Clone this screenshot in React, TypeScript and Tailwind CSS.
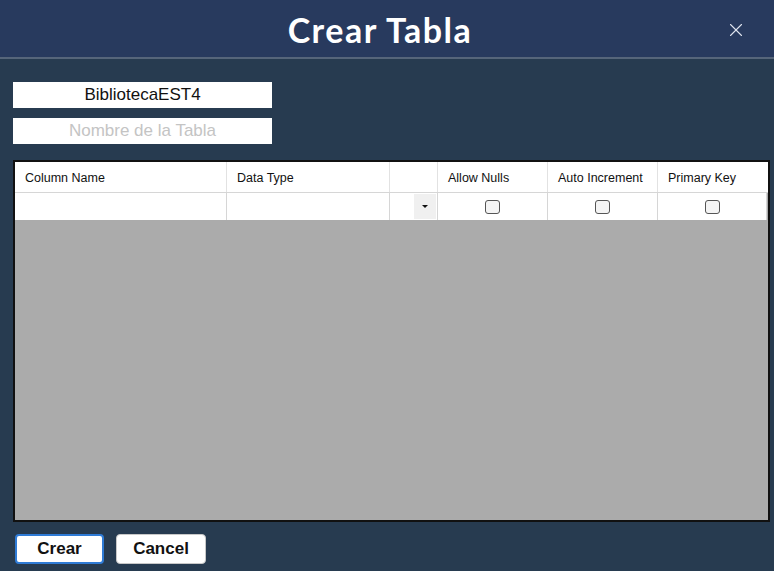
import { X } from "lucide-react";

const cols = [
  { w: "w-[212px]", label: "Column Name" },
  { w: "w-[163px]", label: "Data Type" },
  { w: "w-[48px]", label: "" },
  { w: "w-[110px]", label: "Allow Nulls" },
  { w: "w-[110px]", label: "Auto Increment" },
  { w: "flex-1", label: "Primary Key" },
];

function Check() {
  return <div className="w-[15px] h-[14px] rounded-[3px] border border-[#555] bg-[#f4f4f4]"></div>;
}

export default function App() {
  return (
    <div className="w-[774px] h-[571px] bg-[#273b50] flex flex-col font-['Liberation_Sans',Arial,sans-serif] overflow-hidden">
      <div className="h-[59px] bg-[#283a5e] border-b-2 border-[#56657a] flex items-center justify-center relative">
        <span className="text-white text-[34px] font-bold font-['Lato',sans-serif] tracking-[1.5px] mt-[2px] mr-[14px]">Crear Tabla</span>
        <X className="absolute right-[27px] top-[19px] text-[#dfe4ee]" size={22} strokeWidth={1.2} />
      </div>

      <div className="flex flex-col gap-[10px] pl-[13px] pt-[23px]">
        <div className="w-[259px] h-[26px] bg-white flex items-center justify-center text-[17px] text-[#111]">
          BibliotecaEST4
        </div>
        <div className="w-[259px] h-[26px] bg-white flex items-center justify-center text-[17px] text-[#c4c4c4]">
          Nombre de la Tabla
        </div>
      </div>

      <div className="ml-[13px] mt-[16px] w-[757px] h-[362px] border-2 border-[#111] bg-[#ababab] flex flex-col text-[12.5px] text-[#111]">
        <div className="flex h-[31px] bg-white border-b border-[#d6d6d6]">
          {cols.map((c, i) => (
            <div key={i} className={`${c.w} h-full flex items-center pt-[3px] px-[10px] border-r border-[#e2e2e2] last:border-r-0`}>
              {c.label}
            </div>
          ))}
        </div>
        <div className="flex h-[27px] bg-white border-r border-[#d6d6d6] mr-[1px]">
          <div className="w-[212px] border-r border-[#d6d6d6]"></div>
          <div className="w-[163px] border-r border-[#d6d6d6]"></div>
          <div className="w-[48px] border-r border-[#d6d6d6] flex justify-end items-center pr-[1px]">
            <div className="w-[22px] h-[25px] bg-[#f0f0f0] flex items-center justify-center">
              <div className="w-0 h-0 border-l-[3px] border-r-[3px] border-t-[3px] border-l-transparent border-r-transparent border-t-[#111]"></div>
            </div>
          </div>
          <div className="w-[110px] border-r border-[#d6d6d6] flex items-center justify-center"><Check /></div>
          <div className="w-[110px] border-r border-[#d6d6d6] flex items-center justify-center"><Check /></div>
          <div className="flex-1 flex items-center justify-center"><Check /></div>
        </div>
      </div>

      <div className="flex gap-[12px] pl-[15px] pt-[12px]">
        <button className="w-[89px] h-[30px] bg-white rounded-[4px] border-2 border-[#2f7bd6] text-[17px] font-bold text-[#111]">Crear</button>
        <button className="w-[90px] h-[30px] bg-white rounded-[4px] border border-[#c8c8c8] text-[17px] font-bold text-[#111]">Cancel</button>
      </div>
    </div>
  );
}
